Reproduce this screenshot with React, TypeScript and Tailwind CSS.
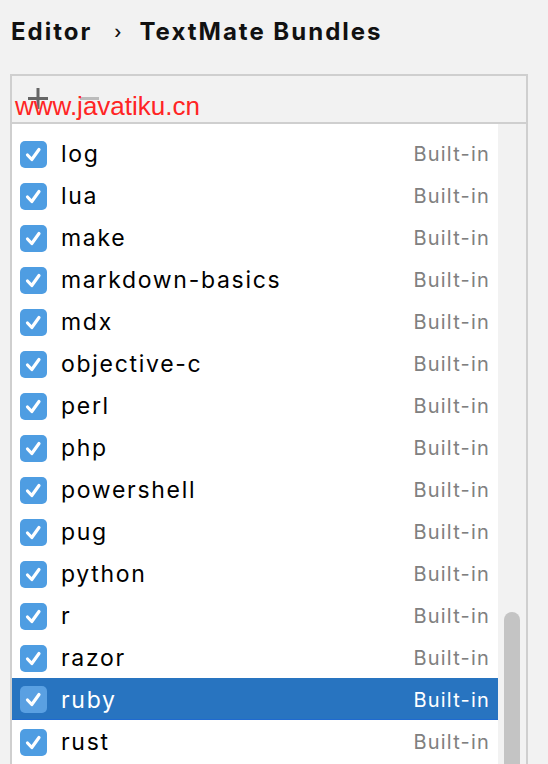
import React from "react";

const items = [
  "log",
  "lua",
  "make",
  "markdown-basics",
  "mdx",
  "objective-c",
  "perl",
  "php",
  "powershell",
  "pug",
  "python",
  "r",
  "razor",
  "ruby",
  "rust",
];

function Check({ selected }: { selected: boolean }) {
  return (
    <div
      className={
        selected
          ? "w-[27px] h-[27px] rounded-[5px] bg-[#5aa0e2] flex items-center justify-center shrink-0"
          : "w-[27px] h-[27px] rounded-[5px] bg-[#4e9de2] flex items-center justify-center shrink-0"
      }
    >
      <svg width="27" height="27" viewBox="0 0 27 27">
        <path
          d="M7.5 14 L11.8 18.5 L19 8.5"
          fill="none"
          stroke="white"
          strokeWidth="3.2"
          strokeLinecap="round"
          strokeLinejoin="round"
        />
      </svg>
    </div>
  );
}

export default function App() {
  return (
    <div
      className="w-[548px] h-[764px] bg-[#f2f2f2] overflow-hidden"
      style={{ fontFamily: "Inter, 'Noto Sans', sans-serif" }}
    >
      <div className="h-[74px] pl-[11px] pt-[17px] flex items-start text-[24px] font-bold text-[#111] leading-[30px] tracking-[2px]">
        <span>Editor</span>
        <span className="ml-[22px] mr-[18px] font-medium text-[18px] tracking-normal">›</span>
        <span>TextMate Bundles</span>
      </div>
      <div className="ml-[10px] w-[518px] border-2 border-[#cfcfcf]">
        <div className="h-[48px] border-b-2 border-[#cfcfcf] relative flex items-center">
          <svg width="20" height="21" viewBox="0 0 20 21" className="ml-[16px] mt-[-1px]">
            <rect x="8.5" y="0" width="3" height="21" fill="#666666" />
            <rect x="0" y="9" width="20" height="3" fill="#666666" />
          </svg>
          <svg width="20" height="21" viewBox="0 0 20 21" className="ml-[32px] mt-[-1px]">
            <rect x="0" y="9" width="19" height="3" fill="#bcbcbc" />
          </svg>
          <span
            className="absolute left-[3px] top-[15px] text-[26px] leading-[30px] text-[#ff2424]"
            style={{ fontFamily: "'Liberation Sans', Arial, sans-serif" }}
          >
            www.javatiku.cn
          </span>
        </div>
        <div className="flex h-[640px]">
          <div className="w-[486px] bg-white pt-[8px]">
            {items.map((name) => {
              const sel = name === "ruby";
              return (
                <div
                  key={name}
                  className={
                    sel
                      ? "h-[42px] flex items-center pl-[8px] pr-[8px] bg-[#2874c0] border-b border-[#1f6ad0] pt-[2px]"
                      : "h-[42px] flex items-center pl-[8px] pr-[8px] pt-[2px]"
                  }
                >
                  <Check selected={sel} />
                  <span
                    className={
                      sel
                        ? "ml-[14px] flex-1 text-[23px] leading-[28px] tracking-[1.7px] text-white"
                        : "ml-[14px] flex-1 text-[23px] leading-[28px] tracking-[1.7px] text-black"
                    }
                  >
                    {name}
                  </span>
                  <span
                    className={
                      sel
                        ? "text-[20px] leading-[28px] tracking-[1.2px] text-white"
                        : "text-[20px] leading-[28px] tracking-[1.2px] text-[#808080]"
                    }
                  >
                    Built-in
                  </span>
                </div>
              );
            })}
          </div>
          <div className="w-[28px] bg-[#f2f2f2] pt-[488px] pl-[6px]">
            <div className="w-[16px] h-[200px] rounded-full bg-[#c4c4c4]" />
          </div>
        </div>
      </div>
    </div>
  );
}
